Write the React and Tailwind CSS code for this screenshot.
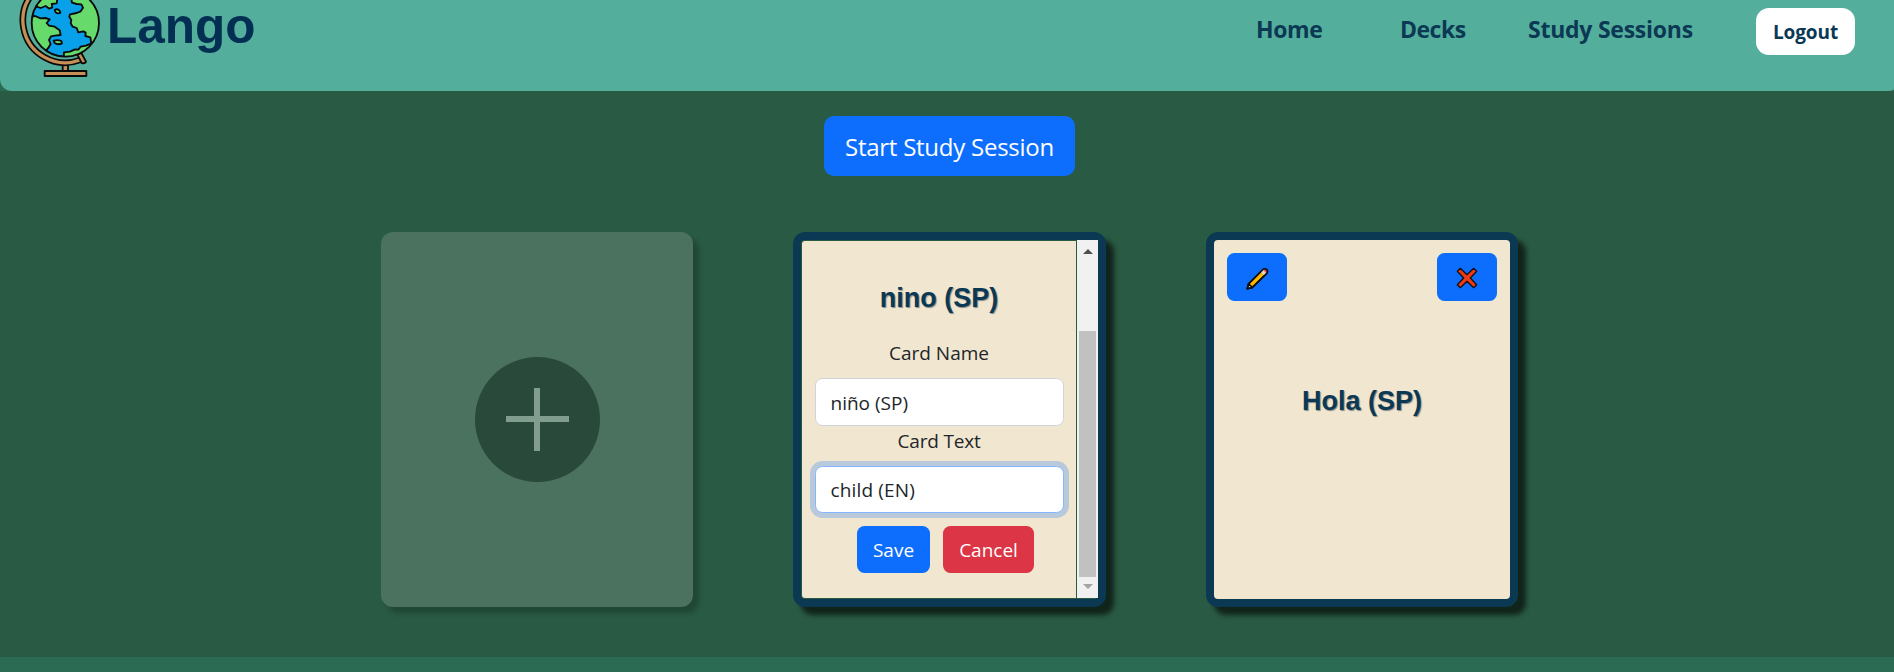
import React from "react";

const UI = "font-['Open_Sans',sans-serif]";
const HEAD = "font-['Liberation_Sans',sans-serif]";

function Globe() {
  return (
    <svg className="h-[91px] w-[107px] shrink-0" viewBox="0 0 321 273" fill="none" stroke="#0a0a0a" strokeWidth="5.5" strokeLinejoin="round" strokeLinecap="round">
      <defs>
        <clipPath id="sphere">
          <circle cx="196" cy="69" r="101" />
        </clipPath>
      </defs>
      <rect x="188" y="190" width="16" height="26" fill="#c58f55" />
      <path d="M195 -66A127 127 0 1 0 240 180" strokeWidth="20" strokeLinecap="butt" />
      <path d="M195 -66A127 127 0 1 0 240 180" stroke="#c58f55" strokeWidth="10" strokeLinecap="butt" />
      <path d="M232 164l12-5 14 26q-3 7-13 4z" fill="#c58f55" />
      <rect x="134" y="213" width="125" height="15" fill="#c58f55" />
      <g clipPath="url(#sphere)">
        <circle cx="196" cy="69" r="101" fill="#08a0e9" />
        <g fill="#66db6b">
          <path d="M88 52L105 48L122 55L136 54L149 58L140 69L147 77L164 80L179 91L182 105L165 107L153 109L147 120L152 132L146 142L138 152L80 130Z" />
          <path d="M110 20L122 24L137 18L148 26L157 22L155 12L170 10L173 -10L110 -10Z" />
          <path d="M213 -8L216 8L230 12L244 13L249 23L242 34L230 39L210 43L208 50L214 60L212 70L218 80L230 84L235 97L250 94L257 98L256 108L271 112L274 130L310 120L300 -20Z" />
          <path d="M191 180L192 157L210 155L225 148L235 149L242 140L258 137L280 128L260 170Z" />
          <path d="M164 30q8-5 15 2l2 7q-8 3-14-2z" />
          <path d="M161 122q12-4 23 1l2 7q-12 6-22-1z" />
        </g>
      </g>
      <circle cx="196" cy="69" r="101" />
    </svg>
  );
}

function Pencil() {
  return (
    <svg className="h-[23px] w-[23px]" viewBox="0 0 72 72" stroke="#111" strokeWidth="5" strokeLinejoin="round">
      <path d="M4 68L8 53L53 8Q58 3 65 8Q69 14 65 20L20 64Z" fill="#fdb900" />
      <path d="M4 68L8 53L20 64Z" fill="#ecd9c2" />
      <path d="M46 15L53 8L65 20L58 27Z" fill="#d8d8d8" stroke="none" />
      <path d="M53 8Q58 3 65 8Q69 14 65 20Z" fill="#ee4458" stroke="none" />
      <path d="M4 68L8 53L53 8Q58 3 65 8Q69 14 65 20L20 64Z" fill="none" />
    </svg>
  );
}

function Cross() {
  return (
    <svg className="h-[22px] w-[22px]" viewBox="0 0 66 66" stroke="#111" strokeWidth="4" strokeLinejoin="round">
      <path d="M4 13L13 4L33 23L53 4L62 13L43 33L62 53L53 62L33 43L13 62L4 53L23 33Z" fill="#f03a17" />
    </svg>
  );
}

const cardShadow = "shadow-[8px_8px_5px_rgba(0,0,0,0.6)]";
const title = `${HEAD} text-[27px] leading-[34px] font-bold text-[#0b3954] [text-shadow:1px_1px_1px_#888]`;

export default function App() {
  return (
    <div className={`${UI} flex h-[672px] w-full flex-col overflow-hidden bg-[#2b6a53] text-[#212529]`}>
      <header className="-mr-[6px] flex h-[91px] shrink-0 items-start rounded-b-[12px] bg-[#53ae9c]">
        <Globe />
        <h1 className={`${HEAD} h-[54px] text-[49.5px] leading-[52px] font-bold text-[#032f52]`}>Lango</h1>
        <nav className="ml-auto flex items-start pr-[45px] text-[23px] leading-[30px] font-bold text-[#0b3954]">
          <a className="mt-[14px] -ml-px w-[144px] tracking-[-0.4px]">Home</a>
          <a className="mt-[14px] w-[128px] tracking-[-0.5px]">Decks</a>
          <a className="mt-[14px] w-[228px] tracking-[-0.25px] whitespace-nowrap">Study Sessions</a>
          <button className="mt-[8px] h-[47px] w-[99px] rounded-[13px] bg-white text-[19px] font-bold tracking-[-0.1px]">Logout</button>
        </nav>
      </header>

      <main className="flex h-[566px] shrink-0 flex-col items-center bg-[#295a43] pt-[25px]">
        <button className="ml-[5px] h-[60px] w-[251px] rounded-[10px] bg-[#0d6efd] pt-[2px] text-[24px] tracking-[-0.25px] whitespace-nowrap text-white">
          Start Study Session
        </button>

        <div className="mt-[56px] flex w-full gap-[100px] pl-[381px]">
          <section className="flex h-[375px] w-[312px] shrink-0 items-center justify-center rounded-[12px] bg-[#4a725e] shadow-[6px_6px_5px_rgba(0,0,0,0.22)]">
            <div className="flex h-[125px] w-[125px] items-center justify-center rounded-full bg-[#29493a]">
              <svg className="h-[63px] w-[63px]" viewBox="0 0 63 63" fill="#809d8e">
                <path d="M28 0h6v28h29v6H34v29h-6V34H0v-6h28z" />
              </svg>
            </div>
          </section>

          <section className={`flex h-[375px] w-[313px] shrink-0 rounded-[12px] border-8 border-[#0b3954] bg-[#295a43] ${cardShadow}`}>
            <div className="my-px ml-px flex w-[274px] flex-col items-center rounded-l-[3px] bg-[#f1e7d0] pt-[40px]">
              <h2 className={title}>nino (SP)</h2>
              <label className="mt-[23px] text-[19px] leading-[30px]">Card Name</label>
              <div className="mt-[10px] flex h-[48px] w-[249px] items-center rounded-[7.5px] border border-[#ced4da] bg-white px-[15px] pt-[2px] text-[19px]">niño (SP)</div>
              <label className="text-[19px] leading-[30px] tracking-[-0.2px]">Card Text</label>
              <div className="mt-[10px] flex h-[47px] w-[249px] items-center rounded-[7.5px] border border-[#86b7fe] bg-white px-[15px] pt-[2px] text-[19px] tracking-[0.15px] shadow-[0_0_0_5px_rgba(13,110,253,0.25)]">child (EN)</div>
              <div className="mt-[13px] ml-[13px] flex gap-[13px] text-[19px] text-white">
                <button className="h-[47px] w-[73px] rounded-[7.5px] bg-[#0d6efd] pt-[2px]">Save</button>
                <button className="h-[47px] w-[91px] rounded-[7.5px] bg-[#dc3545] pt-[2px]">Cancel</button>
              </div>
            </div>
            <div className="ml-px flex h-[358px] w-[21px] flex-col items-center bg-[#f1f1f1]">
              <svg className="mt-[8px] h-[6px] w-[10px]" viewBox="0 0 10 6"><path d="M0 6L5 1L10 6z" fill="#505050" /></svg>
              <div className="mt-[77px] h-[246px] w-[17px] bg-[#c1c1c1]" />
              <svg className="mt-[7px] h-[6px] w-[10px]" viewBox="0 0 10 6"><path d="M0 0L5 5L10 0z" fill="#a3a3a3" /></svg>
            </div>
          </section>

          <section className={`flex h-[375px] w-[312px] shrink-0 flex-col rounded-[12px] border-8 border-[#0b3954] bg-[#f1e7d0] px-[13px] pt-[13px] ${cardShadow}`}>
            <div className="flex justify-between">
              <button className="flex h-[48px] w-[60px] items-center justify-center rounded-[7.5px] bg-[#0d6efd] pt-[2px]"><Pencil /></button>
              <button className="flex h-[48px] w-[60px] items-center justify-center rounded-[7.5px] bg-[#0d6efd] pt-[2px]"><Cross /></button>
            </div>
            <h2 className={`${title} mt-[83px] text-center`}>Hola (SP)</h2>
          </section>
        </div>
      </main>
    </div>
  );
}
